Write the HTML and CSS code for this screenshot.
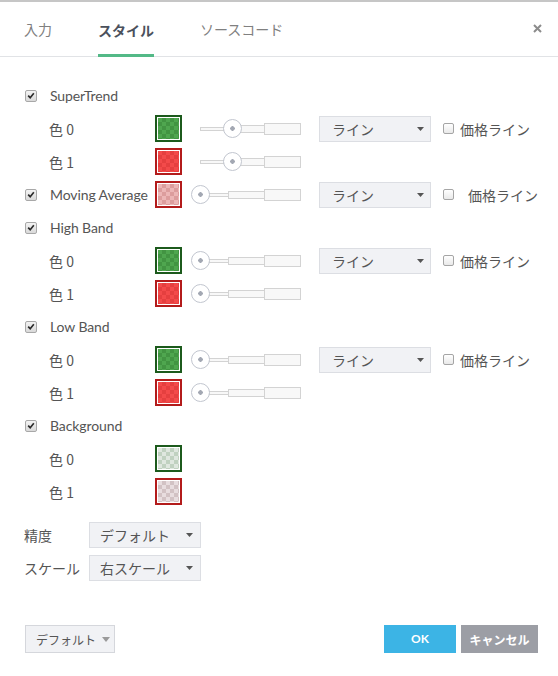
FILE: index.html
```html
<!DOCTYPE html>
<html lang="ja">
<head>
<meta charset="utf-8">
<link rel="stylesheet" href="styles.css">
</head>
<body>
<div class="dialog">
  <div class="header">
    <div class="tab">入力</div>
    <div class="tab active">スタイル</div>
    <div class="tab">ソースコード</div>
    <div class="close"><svg width="9" height="9" viewBox="0 0 9 9"><path d="M1 1L8 8M8 1L1 8" stroke="#8c8c8c" stroke-width="2" fill="none"/></svg></div>
  </div>

  <div class="content">
    <div class="row sec">
      <span class="chk on"><svg viewBox="0 0 12 12"><path d="M2.6 6.2L5 8.6L9.4 3.2" stroke="#2b2b2b" stroke-width="2" fill="none"/></svg></span>
      <span class="name">SuperTrend</span>
    </div>
    <div class="row sub">
      <span class="lbl">色 0</span>
      <span class="sw b-green"><i class="ck green"></i></span>
      <div class="slider"><div class="track"><i class="t1"></i><i class="t2"></i><i class="t3"></i></div><span class="thumb mid"></span></div>
      <div class="select"><span>ライン</span><svg class="caret" width="7" height="4" viewBox="0 0 7 4"><path d="M0 0H7L3.5 4Z" fill="#555"/></svg></div>
      <span class="chk off"></span><span class="price">価格ライン</span>
    </div>
    <div class="row sub">
      <span class="lbl">色 1</span>
      <span class="sw b-red"><i class="ck red"></i></span>
      <div class="slider"><div class="track"><i class="t1"></i><i class="t2"></i><i class="t3"></i></div><span class="thumb mid"></span></div>
    </div>

    <div class="row sec">
      <span class="chk on"><svg viewBox="0 0 12 12"><path d="M2.6 6.2L5 8.6L9.4 3.2" stroke="#2b2b2b" stroke-width="2" fill="none"/></svg></span>
      <span class="name">Moving Average</span>
      <span class="sw b-red"><i class="ck pink"></i></span>
      <div class="slider"><div class="track"><i class="t1"></i><i class="t2"></i><i class="t3"></i></div><span class="thumb"></span></div>
      <div class="select"><span>ライン</span><svg class="caret" width="7" height="4" viewBox="0 0 7 4"><path d="M0 0H7L3.5 4Z" fill="#555"/></svg></div>
      <span class="chk off"></span><span class="price wide">価格ライン</span>
    </div>

    <div class="row sec">
      <span class="chk on"><svg viewBox="0 0 12 12"><path d="M2.6 6.2L5 8.6L9.4 3.2" stroke="#2b2b2b" stroke-width="2" fill="none"/></svg></span>
      <span class="name">High Band</span>
    </div>
    <div class="row sub">
      <span class="lbl">色 0</span>
      <span class="sw b-green"><i class="ck green"></i></span>
      <div class="slider"><div class="track"><i class="t1"></i><i class="t2"></i><i class="t3"></i></div><span class="thumb"></span></div>
      <div class="select"><span>ライン</span><svg class="caret" width="7" height="4" viewBox="0 0 7 4"><path d="M0 0H7L3.5 4Z" fill="#555"/></svg></div>
      <span class="chk off"></span><span class="price">価格ライン</span>
    </div>
    <div class="row sub">
      <span class="lbl">色 1</span>
      <span class="sw b-red"><i class="ck red"></i></span>
      <div class="slider"><div class="track"><i class="t1"></i><i class="t2"></i><i class="t3"></i></div><span class="thumb"></span></div>
    </div>

    <div class="row sec">
      <span class="chk on"><svg viewBox="0 0 12 12"><path d="M2.6 6.2L5 8.6L9.4 3.2" stroke="#2b2b2b" stroke-width="2" fill="none"/></svg></span>
      <span class="name">Low Band</span>
    </div>
    <div class="row sub">
      <span class="lbl">色 0</span>
      <span class="sw b-green"><i class="ck green"></i></span>
      <div class="slider"><div class="track"><i class="t1"></i><i class="t2"></i><i class="t3"></i></div><span class="thumb"></span></div>
      <div class="select"><span>ライン</span><svg class="caret" width="7" height="4" viewBox="0 0 7 4"><path d="M0 0H7L3.5 4Z" fill="#555"/></svg></div>
      <span class="chk off"></span><span class="price">価格ライン</span>
    </div>
    <div class="row sub">
      <span class="lbl">色 1</span>
      <span class="sw b-red"><i class="ck red"></i></span>
      <div class="slider"><div class="track"><i class="t1"></i><i class="t2"></i><i class="t3"></i></div><span class="thumb"></span></div>
    </div>

    <div class="row sec">
      <span class="chk on"><svg viewBox="0 0 12 12"><path d="M2.6 6.2L5 8.6L9.4 3.2" stroke="#2b2b2b" stroke-width="2" fill="none"/></svg></span>
      <span class="name">Background</span>
    </div>
    <div class="row sub">
      <span class="lbl">色 0</span>
      <span class="sw b-green"><i class="ck bg-green"></i></span>
    </div>
    <div class="row sub">
      <span class="lbl">色 1</span>
      <span class="sw b-red"><i class="ck bg-red"></i></span>
    </div>

    <div class="row opt first">
      <span class="olbl">精度</span>
      <div class="select narrow"><span>デフォルト</span><svg class="caret" width="7" height="4" viewBox="0 0 7 4"><path d="M0 0H7L3.5 4Z" fill="#555"/></svg></div>
    </div>
    <div class="row opt">
      <span class="olbl">スケール</span>
      <div class="select narrow"><span>右スケール</span><svg class="caret" width="7" height="4" viewBox="0 0 7 4"><path d="M0 0H7L3.5 4Z" fill="#555"/></svg></div>
    </div>
  </div>

  <div class="footer">
    <div class="btn-default"><span>デフォルト</span><svg width="8" height="5" viewBox="0 0 8 5"><path d="M0 0H8L4 5Z" fill="#9a9a9a"/></svg></div>
    <div class="actions">
      <div class="btn ok">OK</div>
      <div class="btn cancel">キャンセル</div>
    </div>
  </div>
</div>
</body>
</html>
```

FILE: styles.css
```css
html, body {
  margin: 0;
  padding: 0;
  background: #ffffff;
}

body {
  font-family: Lato, "Noto Sans CJK JP", sans-serif;
  font-size: 14px;
  color: #555555;
}

.dialog {
  width: 558px;
  height: 676px;
  box-sizing: border-box;
  border-top: 2px solid #c6c6c6;
  background: #ffffff;
}

.header {
  height: 55px;
  box-sizing: border-box;
  display: flex;
  align-items: stretch;
  gap: 46px;
  padding-left: 24px;
  border-bottom: 1px solid #e1e3e6;
}

.tab {
  display: flex;
  align-items: center;
  color: #808080;
  font-size: 14px;
  font-family: "Noto Sans CJK JP", sans-serif;
}

.tab.active {
  color: #4b515c;
  font-weight: bold;
  border-bottom: 3px solid #53b987;
  margin-bottom: -1px;
  padding-top: 3px;
}

.close {
  margin-left: auto;
  margin-right: 16px;
  display: flex;
  align-items: center;
  padding-bottom: 2px;
}

.close svg {
  display: block;
}

.content {
  padding-top: 22px;
}

.row {
  height: 33px;
  display: flex;
  align-items: center;
}

.row.sec {
  padding-left: 25px;
}

.row.sub {
  padding-left: 49px;
}

.chk {
  box-sizing: border-box;
  display: inline-flex;
  align-items: center;
  justify-content: center;
  flex: none;
}

.chk.on {
  width: 12px;
  height: 12px;
  border: 1px solid #a8a8a8;
  border-radius: 2px;
  background: linear-gradient(#f3f3f3, #d9d9d9);
}

.chk.on svg {
  width: 11px;
  height: 11px;
  display: block;
}

.chk.off {
  width: 11px;
  height: 11px;
  border: 1px solid #a5a5a5;
  border-radius: 2px;
  background: linear-gradient(#ffffff, #e9e9e9);
  margin-left: 12px;
}

.name {
  margin-left: 13px;
  width: 105px;
  white-space: nowrap;
  color: #555555;
  letter-spacing: -0.1px;
}

.lbl {
  width: 106px;
  font-family: "Noto Sans CJK JP", sans-serif;
  color: #555555;
}

.sw {
  box-sizing: border-box;
  width: 27px;
  height: 27px;
  border: 2px solid;
  padding: 1px;
  background: #ffffff;
  display: block;
  flex: none;
}

.sw.b-green {
  border-color: #1c5a1c;
}

.sw.b-red {
  border-color: #b31b1b;
}

.ck {
  display: block;
  width: 100%;
  height: 100%;
  background-size: 8px 8px;
}

.ck.green {
  background-image: repeating-conic-gradient(#429442 0 25%, #4fa64f 0 50%);
}

.ck.red {
  background-image: repeating-conic-gradient(#e53f3f 0 25%, #f34a4a 0 50%);
}

.ck.pink {
  background-image: repeating-conic-gradient(#dc9d9d 0 25%, #ecb6b6 0 50%);
}

.ck.bg-green {
  background-image: repeating-conic-gradient(#c0d1c0 0 25%, #dfe7df 0 50%);
}

.ck.bg-red {
  background-image: repeating-conic-gradient(#d2c2c4 0 25%, #e8dddf 0 50%);
}

.slider {
  position: relative;
  width: 110px;
  height: 20px;
  margin-left: 9px;
  display: flex;
  align-items: center;
  flex: none;
}

.track {
  margin-left: 9px;
  width: 101px;
  display: flex;
  align-items: center;
}

.track i {
  display: block;
  box-sizing: border-box;
  border: 1px solid #d3d3d3;
  background: #f8f8f8;
}

.track .t1 {
  width: 28px;
  height: 4px;
  border-right: none;
}

.track .t2 {
  width: 36px;
  height: 8px;
  border-right: none;
}

.track .t3 {
  width: 37px;
  height: 12px;
}

.thumb {
  position: absolute;
  left: 0;
  top: 0;
  width: 19px;
  height: 19px;
  box-sizing: border-box;
  border: 1px solid #c2c6cf;
  border-radius: 50%;
  background: radial-gradient(circle, #a3a8b3 0 2px, #ffffff 2.5px);
}

.thumb.mid {
  left: 32px;
}

.select {
  box-sizing: border-box;
  width: 112px;
  height: 26px;
  margin-left: 18px;
  border: 1px solid #dcdee3;
  background: #f1f2f5;
  display: flex;
  align-items: center;
  padding-left: 12px;
  padding-right: 6px;
  font-family: "Noto Sans CJK JP", sans-serif;
  color: #555555;
  flex: none;
}

.select .caret {
  margin-left: auto;
  display: block;
}

.price {
  margin-left: 6px;
  font-family: "Noto Sans CJK JP", sans-serif;
  color: #555555;
  white-space: nowrap;
}

.price.wide {
  margin-left: 14px;
}

.row.opt {
  padding-left: 24px;
}

.row.opt.first {
  margin-top: 10px;
}

.olbl {
  width: 65px;
  font-family: "Noto Sans CJK JP", sans-serif;
  color: #555555;
}

.select.narrow {
  margin-left: 0;
  padding-left: 10px;
  padding-right: 7px;
}

.footer {
  margin-top: 41px;
  display: flex;
  justify-content: space-between;
  align-items: center;
  padding-left: 25px;
  padding-right: 20px;
}

.btn-default {
  box-sizing: border-box;
  width: 90px;
  height: 28px;
  border: 1px solid #d5d7dc;
  background: #f1f2f5;
  display: flex;
  align-items: center;
  padding-left: 10px;
  gap: 6px;
  font-family: "Noto Sans CJK JP", sans-serif;
  font-size: 12px;
  color: #555555;
}

.btn-default svg {
  display: block;
}

.actions {
  display: flex;
  gap: 5px;
}

.btn {
  height: 28px;
  display: flex;
  align-items: center;
  justify-content: center;
  color: #ffffff;
  font-weight: bold;
  font-size: 12px;
  font-family: Lato, "Noto Sans CJK JP", sans-serif;
}

.btn.ok {
  width: 72px;
  background: #3cb4e5;
  padding-bottom: 2px;
  box-sizing: border-box;
}

.btn.cancel {
  width: 77px;
  background: #9c9ea5;
}
```
